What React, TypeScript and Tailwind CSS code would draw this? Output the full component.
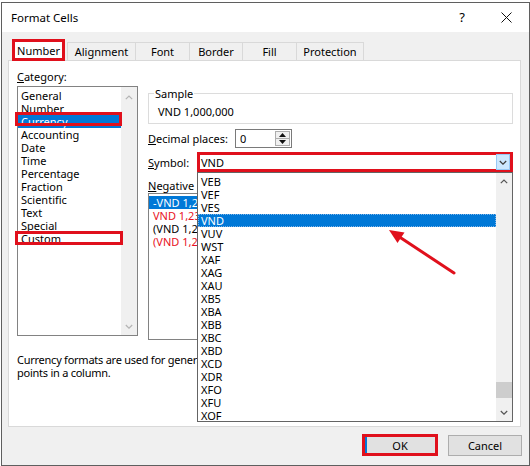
import React from "react";

function Chevron({ dir, color, w = 8 }: { dir: "up" | "down"; color: string; w?: number }) {
  const h = Math.round(w / 2) + 1;
  const d = dir === "up" ? `M0.8 ${h - 0.8} L${w / 2} 1 L${w - 0.8} ${h - 0.8}` : `M0.8 1 L${w / 2} ${h - 0.8} L${w - 0.8} 1`;
  return (
    <svg width={w} height={h} viewBox={`0 0 ${w} ${h}`}>
      <path d={d} fill="none" stroke={color} strokeWidth="1.2" />
    </svg>
  );
}

const categories = [
  "General",
  "Number",
  "Currency",
  "Accounting",
  "Date",
  "Time",
  "Percentage",
  "Fraction",
  "Scientific",
  "Text",
  "Special",
  "Custom",
];

const symbols = [
  "VEB",
  "VEF",
  "VES",
  "VND",
  "VUV",
  "WST",
  "XAF",
  "XAG",
  "XAU",
  "XB5",
  "XBA",
  "XBB",
  "XBC",
  "XBD",
  "XCD",
  "XDR",
  "XFO",
  "XFU",
  "XOF",
];

export default function App() {
  return (
    <div className="relative w-[530px] h-[466px] bg-white overflow-hidden font-['Noto_Sans',sans-serif] text-[11px] leading-[13px] text-black">
      <div className="ml-[1px] mt-[2px] w-[529px] h-[464px] border border-[#5f5f5f] flex flex-col bg-[#f0f0f0]">
        {/* Title bar */}
        <div className="h-[29px] shrink-0 bg-white flex items-center pl-[9px]">
          <span className="text-[11.5px]">Format Cells</span>
          <span className="ml-auto mr-[36px] text-[13px] leading-[13px]">?</span>
          <svg width="11" height="11" viewBox="0 0 11 11" className="mr-[17px]">
            <path d="M0.5 0.5 L10.5 10.5 M10.5 0.5 L0.5 10.5" stroke="#111" strokeWidth="1" />
          </svg>
        </div>

        {/* Tabs */}
        <div className="flex items-end mt-[7px] ml-[10px] h-[21px] shrink-0">
          <div className="relative z-10 mb-[-1px] w-[53px] h-[22px] border-[3px] border-[#e0101c] bg-white flex items-center justify-center">
            Number
          </div>
          <div className="ml-[2px] w-[68px] h-[18px] border-l border-t border-[#d9d9d9] flex items-center justify-center">
            Alignment
          </div>
          <div className="w-[54px] h-[18px] border-l border-t border-[#d9d9d9] flex items-center justify-center">
            Font
          </div>
          <div className="w-[53px] h-[18px] border-l border-t border-[#d9d9d9] flex items-center justify-center">
            Border
          </div>
          <div className="w-[54px] h-[18px] border-l border-t border-[#d9d9d9] flex items-center justify-center">
            Fill
          </div>
          <div className="w-[68px] h-[18px] border-l border-t border-r border-[#d9d9d9] flex items-center justify-center">
            Protection
          </div>
        </div>

        {/* Panel */}
        <div className="ml-[6px] w-[513px] h-[367px] shrink-0 bg-white border border-[#d9d9d9] pt-[9px] pl-[8px] flex flex-col">
          <div className="flex">
            {/* Left column */}
            <div className="w-[121px] flex flex-col">
              <div className="h-[13px]">
                <span className="underline">C</span>ategory:
              </div>
              <div className="mt-[3px] h-[250px] border border-[#828282] flex">
                <div className="flex-1 pt-[2px]">
                  {categories.map((c) => (
                    <div
                      key={c}
                      className={
                        c === "Currency"
                          ? "relative h-[13px] pl-[3px] bg-[#0078d7] text-white"
                          : "relative h-[13px] pl-[3px]"
                      }
                    >
                      {c}
                      {c === "Currency" && (
                        <div className="absolute left-[-3px] right-[-1px] top-[-3px] bottom-[2px] border-[3px] border-[#e0101c]" />
                      )}
                      {c === "Custom" && (
                        <div className="absolute left-[-3px] right-[-2px] top-[-1px] bottom-[0px] border-[3px] border-[#e0101c]" />
                      )}
                    </div>
                  ))}
                </div>
                <div className="w-[16px] bg-[#f0f0f0] flex flex-col">
                  <div className="h-[19px] flex items-center justify-center pt-[2px]">
                    <Chevron dir="up" color="#b4b4b4" />
                  </div>
                  <div className="flex-1" />
                  <div className="h-[18px] flex items-center justify-center">
                    <Chevron dir="down" color="#b4b4b4" />
                  </div>
                </div>
              </div>
            </div>

            {/* Right column */}
            <div className="ml-[10px] w-[365px] flex flex-col">
              <div className="relative mt-[23px] h-[31px] border border-[#dcdcdc]">
                <span className="absolute left-[5px] top-[-7px] bg-white px-[1px]">Sample</span>
                <div className="pt-[11px] pl-[9px]">VND 1,000,000</div>
              </div>

              <div className="mt-[5px] h-[19px] flex items-center">
                <div className="w-[87px]">
                  <span className="underline">D</span>ecimal places:
                </div>
                <div className="w-[57px] h-[19px] border border-[#7a7a7a] flex items-center">
                  <span className="pl-[4px]">0</span>
                  <div className="ml-auto mr-[1px] w-[15px] h-[15px] flex flex-col border border-[#adadad] bg-[#f0f0f0]">
                    <div className="flex-1 flex items-center justify-center border-b border-[#adadad]">
                      <svg width="7" height="4" viewBox="0 0 7 4">
                        <path d="M0 4 L3.5 0 L7 4 Z" fill="#111" />
                      </svg>
                    </div>
                    <div className="flex-1 flex items-center justify-center">
                      <svg width="7" height="4" viewBox="0 0 7 4">
                        <path d="M0 0 L3.5 4 L7 0 Z" fill="#111" />
                      </svg>
                    </div>
                  </div>
                </div>
              </div>

              <div className="relative mt-[4px] h-[20px] flex items-center">
                <div className="w-[49px]">
                  <span className="underline">S</span>ymbol:
                </div>
                <div className="relative w-[316px] h-[20px] border-[3px] border-[#e0101c] flex items-center">
                  <span className="pl-[1px]">VND</span>
                  <div className="absolute right-0 top-[-1px] bottom-[-1px] w-[14px] bg-[#cce8ff] border border-[#99c9f5] flex items-center justify-center">
                    <Chevron dir="down" color="#3c3c3c" w={8} />
                  </div>
                </div>

                {/* Dropdown list */}
                <div className="absolute z-20 left-[49px] top-[20px] w-[316px] h-[250px] bg-white border border-[#646464] flex">
                  <div className="flex-1 pt-[2px]">
                    {symbols.map((s) => (
                      <div
                        key={s}
                        className={
                          s === "VND"
                            ? "h-[13px] pl-[2px] bg-[#0078d7] text-white border border-dotted border-[#7fb3e6] leading-[11px]"
                            : "h-[13px] pl-[3px]"
                        }
                      >
                        {s}
                      </div>
                    ))}
                  </div>
                  <div className="w-[16px] bg-[#f0f0f0] flex flex-col">
                    <div className="h-[17px] flex items-center justify-center">
                      <Chevron dir="up" color="#555" />
                    </div>
                    <div className="flex-1 flex flex-col justify-end pb-[6px]">
                      <div className="h-[16px] bg-[#cdcdcd]" />
                    </div>
                    <div className="h-[17px] flex items-center justify-center">
                      <Chevron dir="down" color="#555" />
                    </div>
                  </div>
                </div>
              </div>

              <div className="mt-[7px] h-[13px]">
                <span className="underline">N</span>egative numbers:
              </div>
              <div className="mt-[1px] h-[147px] border border-[#828282] pt-[2px]">
                <div className="h-[13px] pl-[4px] bg-[#0078d7] text-white">-VND 1,234</div>
                <div className="h-[13px] pl-[4px] text-[#e81123]">VND 1,234</div>
                <div className="h-[13px] pl-[4px]">(VND 1,234)</div>
                <div className="h-[13px] pl-[4px] text-[#e81123]">(VND 1,234)</div>
              </div>
            </div>
          </div>

          <div className="mt-[13px] tracking-[-0.25px]">
            Currency formats are used for general monetary values. Use Accounting formats to align decimal
            <br />
            points in a column.
          </div>
        </div>

        {/* Buttons */}
        <div className="mt-[7px] mr-[7px] flex justify-end items-start">
          <div className="w-[76px] h-[22px] border-[3px] border-[#e0101c] bg-[#e1e1e1] flex">
            <div className="w-[2px] bg-[#0078d7]" />
            <div className="flex-1 flex items-center justify-center pr-[2px]">OK</div>
          </div>
          <div className="ml-[10px] mt-[1px] w-[74px] h-[21px] bg-[#e1e1e1] border border-[#adadad] flex items-center justify-center">
            Cancel
          </div>
        </div>
      </div>

      {/* Red annotation arrow */}
      <svg className="absolute left-0 top-0 pointer-events-none z-30" width="530" height="466" viewBox="0 0 530 466">
        <line x1="454" y1="273" x2="398" y2="236" stroke="#e0101c" strokeWidth="3" strokeLinecap="round" />
        <polygon points="389,230 404.5,232.5 397.5,243" fill="#e0101c" />
      </svg>
    </div>
  );
}
